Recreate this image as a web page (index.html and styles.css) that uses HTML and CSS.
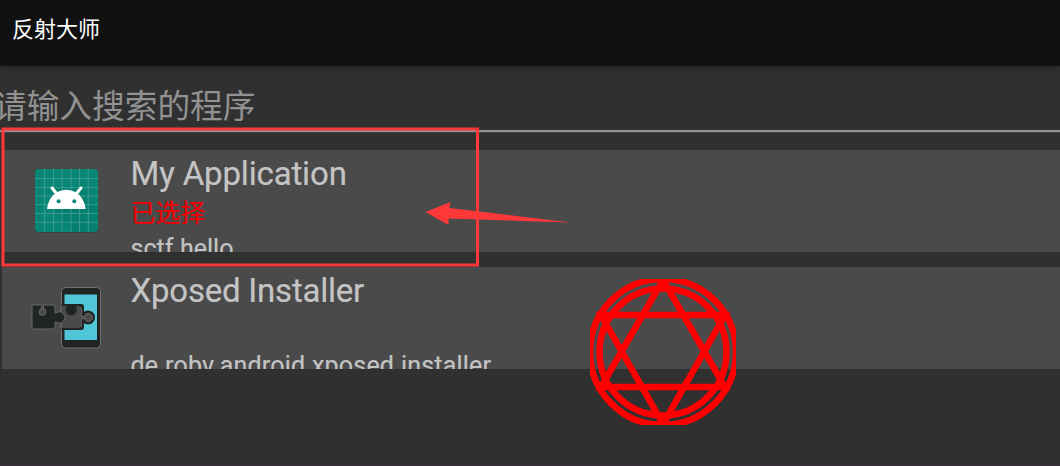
FILE: index.html
```html
<!DOCTYPE html>
<html lang="zh-CN">
<head>
<meta charset="utf-8">
<title>反射大师</title>
<link rel="stylesheet" href="styles.css">
</head>
<body>
<div class="screen">
  <header class="app-bar"><h1 class="app-title">反射大师</h1></header>
  <div class="search"><span class="hint">请输入搜索的程序</span></div>
  <main class="list">
    <section class="row">
      <svg class="icon" viewBox="30 160 74 80">
        <rect x="35" y="169.500" width="63" height="63.500" rx="4" fill="#353b3a" opacity=".6"/>
        <rect x="35" y="169" width="63" height="63" rx="4" fill="#078675"/>
        <path d="M53 209l20 23h21l4-4v-22l-21-21z" fill="#047567" opacity=".3"/>
        <path d="M44.700 169v63M53.500 169v63M62 169v63M71 169v63M79.500 169v63M88.300 169v63M35 178.500h63M35 187.500h63M35 196h63M35 204.700h63M35 213.500h63M35 222.300h63" stroke="#45a194" stroke-width=".8"/>
        <path d="M52 188l5 6M81 188l-5 6" stroke="#fff" stroke-width="3" stroke-linecap="round"/>
        <path d="M47 209c1-11 9-19.300 19.300-19.300S84.600 198 85.600 209z" fill="#fff"/>
        <circle cx="58.600" cy="201.200" r="2" fill="#078675"/><circle cx="74.300" cy="201.200" r="2" fill="#078675"/>
      </svg>
      <div class="info">
        <div class="name name-app">My Application</div>
        <div class="status">已选择</div>
        <div class="package package-app">sctf.hello</div>
      </div>
    </section>
    <section class="row">
      <svg class="icon" viewBox="30 277 74 80">
        <rect x="61.500" y="287.500" width="39" height="60.500" rx="4" fill="#202423" stroke="#707070"/>
        <path d="M64.500 294.500H97V340H64.500V330H81q3 0 3-3v-5.500V307q0-3-3-3H64.500z" fill="#50c6d8"/>
        <circle cx="88" cy="317.500" r="7" fill="#202423"/>
        <path d="M61 306.500H79.500q2.500 0 2.500 2.500V316.500h2.500a4 4 0 1 1 0 2H82V325q0 2.500-2.500 2.500H61z" fill="#4a4a4a" stroke="#707070"/>
        <path d="M61.500 304H80q4 0 4 4v8h-2v-7q0-2.500-2.500-2.500h-18zM82 319h2v7q0 4-4 4H61.500v-2.500h18q2.500 0 2.500-2.500z" fill="#202423"/>
        <path d="M67 306a5.600 5.600 0 1 0 8.500 0z" fill="#202423"/>
        <path d="M33 305h8.500v4h2v-4H53q2 0 2 2v6h1a5.500 5.500 0 1 1 0 9h-1v5q0 2-2 2H33q-1 0-1-1v-22q0-1 1-1z" fill="#202423" stroke="#666"/>
        <circle cx="42.500" cy="312" r="3.400" fill="#4a4a4a" stroke="#707070" stroke-width=".8"/>
      </svg>
      <div class="info">
        <div class="name name-xposed">Xposed Installer</div>
        <div class="status"></div>
        <div class="package package-xposed">de.robv.android.xposed.installer</div>
      </div>
    </section>
  </main>
  <svg class="overlay" viewBox="0 0 1060 466">
    <rect x="3" y="129" width="474.500" height="136" fill="none" stroke="#fe3838" stroke-width="3"/>
    <path d="M425.500 212L450.500 202L449.500 208L571 222.500L448.500 218.500L448.500 225z" fill="#fe3838"/>
    <clipPath id="seal"><rect x="590" y="279" width="146" height="146"/></clipPath>
    <g clip-path="url(#seal)" fill="none" stroke="#f00" stroke-width="6.500">
      <circle cx="663" cy="352" r="73"/>
      <circle cx="663" cy="352" r="63.500"/>
      <path d="M663 280L601 387H725zM663 424L601 315H725z"/>
    </g>
  </svg>
</div>
</body>
</html>
```
FILE: styles.css
```css
body { margin: 0; }
.screen {
  position: relative;
  box-sizing: border-box;
  width: 1060px;
  height: 466px;
  overflow: hidden;
  background: #303030;
  border-bottom: 1px solid #39343a;
  font-family: Roboto, "Noto Sans CJK SC", sans-serif;
}
.app-bar {
  height: 66px;
  display: flex;
  align-items: center;
  padding-left: 12px;
  box-sizing: border-box;
  background: #111;
  box-shadow: 0 1px 5px #202020;
}
.app-title {
  margin: 0;
  padding-bottom: 6px;
  font-size: 22px;
  line-height: 32px;
  font-weight: 400;
  color: #fff;
}
.search {
  height: 66px;
  box-sizing: border-box;
  border-bottom: 2px solid #929292;
  box-shadow: 0 1px 0 #444;
  padding-top: 17px;
}
.hint {
  display: block;
  margin-left: -6px;
  font-size: 32.700px;
  line-height: 48px;
  white-space: nowrap;
  color: #929292;
}
.list {
  display: flex;
  flex-direction: column;
  gap: 16px;
  padding: 18px 0 0 2px;
}
.row {
  height: 101.500px;
  display: flex;
  gap: 27px;
  overflow: hidden;
  background: #4a4a4a;
}
.row + .row { margin-top: -0.500px; }
.icon { flex: none; width: 74px; height: 80px; margin: 10px 0 0 28px; }
.info { display: flex; flex-direction: column; margin-left: -0.500px; white-space: nowrap; color: #c4c4c4; }
.name, .status, .package { flex: none; -webkit-text-stroke: 0.200px currentColor; }
.name { height: 47px; font-size: 33px; line-height: 48px; }
.name-app { letter-spacing: -0.150px; }
.name-xposed { letter-spacing: -0.220px; }
.status { height: 33px; font-size: 25px; line-height: 34px; color: #f00000; }
.package { font-size: 25px; line-height: 37px; }
.package-xposed { letter-spacing: 0.190px; }
.overlay { position: absolute; left: 0; top: 0; width: 1060px; height: 466px; }
```
